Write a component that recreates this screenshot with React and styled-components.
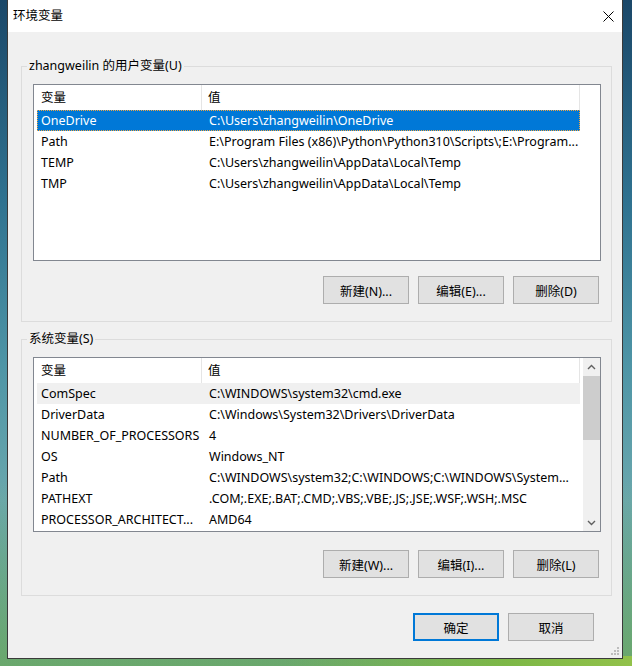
import React from "react";
import styled, { createGlobalStyle, css } from "styled-components";

const GlobalStyle = createGlobalStyle`
  html, body {
    margin: 0;
    padding: 0;
  }
  body {
    width: 632px;
    height: 666px;
    overflow: hidden;
    font-family: "Noto Sans", "Noto Sans CJK SC", sans-serif;
    font-size: 12.5px;
    color: #000;
    background:
      linear-gradient(90deg, rgba(0,0,0,0) 45%, rgba(128,186,64,0.85) 80%, rgba(150,196,70,0.9) 100%) bottom / 100% 10px no-repeat,
      linear-gradient(180deg, rgba(0,0,0,0) 72%, rgba(120,180,60,0.45) 100%),
      linear-gradient(180deg, #1b4869 0%, #2f7290 30%, #4e95a6 55%, #6aa7ad 75%, #5f9e94 100%);
  }
`;

const Page = styled.div`
  width: 632px;
  height: 666px;
  box-sizing: border-box;
  padding-left: 7px;
  display: flex;
  align-items: flex-start;
`;

const Window = styled.div`
  position: relative;
  width: 616px;
  height: 659px;
  box-sizing: border-box;
  border: 1px solid #3a3a3a;
  border-top: none;
  background: #f0f0f0;
  display: flex;
  flex-direction: column;
`;

const TitleBar = styled.div`
  height: 32px;
  flex: none;
  background: #fff;
  display: flex;
  align-items: center;
  justify-content: space-between;
  padding: 0 8px 0 5px;
  box-sizing: border-box;
`;

const Title = styled.span`
  line-height: 16px;
`;

const Body = styled.div`
  flex: 1;
  display: flex;
  flex-direction: column;
  padding: 26px 10px 0 13px;
`;

const Group = styled.fieldset`
  margin: ${(p) => p.$top}px 0 0 0;
  min-width: 0;
  border: 1px solid #dcdcdc;
  padding: 10px 10px 17px 11px;
  display: flex;
  flex-direction: column;
  gap: ${(p) => p.$gap}px;
`;

const Legend = styled.legend`
  line-height: 16px;
  padding: 0 2px;
  margin-left: -6px;
`;

const ListBox = styled.div`
  height: ${(p) => p.$height}px;
  box-sizing: border-box;
  border: 1px solid #828790;
  background: #fff;
  display: flex;
`;

const ListContent = styled.div`
  flex: 1;
  min-width: 0;
  display: flex;
  flex-direction: column;
`;

const Header = styled.div`
  display: grid;
  grid-template-columns: 168px 378px;
  height: 25px;
  flex: none;
`;

const HeaderCell = styled.div`
  box-sizing: border-box;
  border-right: 1px solid #e5e5e5;
  padding-left: ${(p) => p.$pad}px;
  display: flex;
  align-items: center;
  line-height: 16px;
`;

const Row = styled.div`
  display: grid;
  grid-template-columns: 165px 378px;
  height: 21px;
  margin-left: 3px;
  width: 543px;
  box-sizing: border-box;
  padding-top: 1px;
  ${(p) =>
    p.$selected &&
    css`
      background: #0078d7;
      color: #fff;
      outline: 1px dotted #f2a541;
      outline-offset: -1px;
    `}
  ${(p) =>
    p.$hover &&
    css`
      background: #f0f0f0;
    `}
`;

const Cell = styled.div`
  padding-left: ${(p) => p.$pad}px;
  display: flex;
  align-items: center;
  white-space: nowrap;
  overflow: hidden;
  line-height: 16px;
`;

const ScrollBar = styled.div`
  width: 17px;
  flex: none;
  background: #f0f0f0;
  display: flex;
  flex-direction: column;
  align-items: stretch;
`;

const ScrollArrow = styled.div`
  height: 17px;
  display: flex;
  align-items: center;
  justify-content: center;
`;

const Thumb = styled.div`
  height: 64px;
  background: #cdcdcd;
  margin: 1px 0 0 0;
`;

const Track = styled.div`
  flex: 1;
`;

const ButtonRow = styled.div`
  display: flex;
  justify-content: flex-end;
  gap: ${(p) => p.$gap || 9}px;
  padding-right: ${(p) => p.$right}px;
  margin-top: ${(p) => p.$top || 0}px;
`;

const Button = styled.button`
  width: 86px;
  height: 28px;
  box-sizing: border-box;
  background: #e1e1e1;
  border: 1px solid #adadad;
  border-radius: 0;
  font-family: inherit;
  font-size: 12.5px;
  color: #000;
  padding: 0;
  display: flex;
  align-items: center;
  justify-content: center;
  ${(p) =>
    p.$default &&
    css`
      border: 2px solid #0078d7;
    `}
`;

const Grip = styled.svg`
  position: absolute;
  right: 2px;
  bottom: 2px;
`;

const userVars = [
  ["OneDrive", "C:\\Users\\zhangweilin\\OneDrive"],
  ["Path", "E:\\Program Files (x86)\\Python\\Python310\\Scripts\\;E:\\Program..."],
  ["TEMP", "C:\\Users\\zhangweilin\\AppData\\Local\\Temp"],
  ["TMP", "C:\\Users\\zhangweilin\\AppData\\Local\\Temp"],
];

const sysVars = [
  ["ComSpec", "C:\\WINDOWS\\system32\\cmd.exe"],
  ["DriverData", "C:\\Windows\\System32\\Drivers\\DriverData"],
  ["NUMBER_OF_PROCESSORS", "4"],
  ["OS", "Windows_NT"],
  ["Path", "C:\\WINDOWS\\system32;C:\\WINDOWS;C:\\WINDOWS\\System..."],
  ["PATHEXT", ".COM;.EXE;.BAT;.CMD;.VBS;.VBE;.JS;.JSE;.WSF;.WSH;.MSC"],
  ["PROCESSOR_ARCHITECT...", "AMD64"],
];

function Chevron({ up }) {
  return (
    <svg width="9" height="6" viewBox="0 0 9 6">
      <path
        d={up ? "M1 5 L4.5 1.5 L8 5" : "M1 1 L4.5 4.5 L8 1"}
        fill="none"
        stroke="#606060"
        strokeWidth="1.4"
      />
    </svg>
  );
}

function VarList({ rows, height, selected, hover, scroll }) {
  return (
    <ListBox $height={height}>
      <ListContent>
        <Header>
          <HeaderCell $pad={7}>变量</HeaderCell>
          <HeaderCell $pad={6}>值</HeaderCell>
        </Header>
        {rows.map(([k, v], i) => (
          <Row key={k + i} $selected={i === selected} $hover={i === hover}>
            <Cell $pad={4}>{k}</Cell>
            <Cell $pad={7}>{v}</Cell>
          </Row>
        ))}
      </ListContent>
      {scroll && (
        <ScrollBar>
          <ScrollArrow>
            <Chevron up />
          </ScrollArrow>
          <Thumb />
          <Track />
          <ScrollArrow>
            <Chevron />
          </ScrollArrow>
        </ScrollBar>
      )}
    </ListBox>
  );
}

export default function App() {
  return (
    <>
      <GlobalStyle />
      <Page>
        <Window>
          <TitleBar>
            <Title>环境变量</Title>
            <svg width="11" height="11" viewBox="0 0 11 11">
              <path d="M0.5 0.5 L10.5 10.5 M10.5 0.5 L0.5 10.5" stroke="#000" strokeWidth="1" />
            </svg>
          </TitleBar>
          <Body>
            <Group $top={0} $gap={15}>
              <Legend>zhangweilin 的用户变量(U)</Legend>
              <VarList rows={userVars} height={177} selected={0} />
              <ButtonRow $right={2} $gap={9}>
                <Button>新建(N)...</Button>
                <Button>编辑(E)...</Button>
                <Button>删除(D)</Button>
              </ButtonRow>
            </Group>
            <Group $top={9} $gap={18}>
              <Legend>系统变量(S)</Legend>
              <VarList rows={sysVars} height={175} hover={0} scroll />
              <ButtonRow $right={2} $gap={9}>
                <Button>新建(W)...</Button>
                <Button>编辑(I)...</Button>
                <Button>删除(L)</Button>
              </ButtonRow>
            </Group>
            <ButtonRow $right={18} $gap={9} $top={17}>
              <Button $default>确定</Button>
              <Button>取消</Button>
            </ButtonRow>
          </Body>
          <Grip width="10" height="10" viewBox="0 0 10 10">
            <rect x="7" y="1" width="2" height="2" fill="#bdbdbd" />
            <rect x="4" y="4" width="2" height="2" fill="#bdbdbd" />
            <rect x="7" y="4" width="2" height="2" fill="#bdbdbd" />
            <rect x="1" y="7" width="2" height="2" fill="#bdbdbd" />
            <rect x="4" y="7" width="2" height="2" fill="#bdbdbd" />
            <rect x="7" y="7" width="2" height="2" fill="#bdbdbd" />
          </Grip>
        </Window>
      </Page>
    </>
  );
}
